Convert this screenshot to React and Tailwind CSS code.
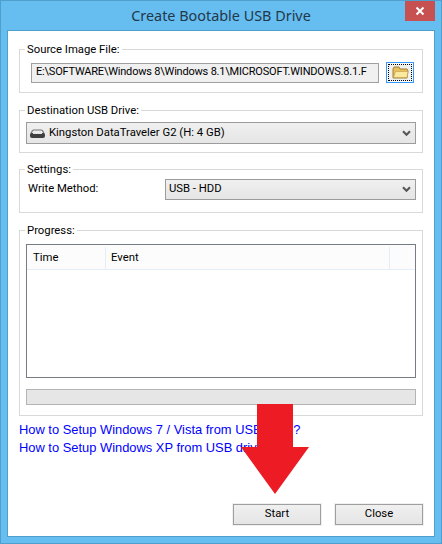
function Group({ label, className, children }) {
  return (
    <fieldset className={"border border-[#d9d9d9] " + className}>
      <legend className="ml-[5px] px-[2px] pt-[1px] font-['Roboto',sans-serif] text-[11.3px] leading-[15px] text-black">{label}</legend>
      {children}
    </fieldset>
  );
}

function Chevron() {
  return (
    <svg width="9" height="7" viewBox="0 0 9 7" className="shrink-0">
      <path d="M1 1.2 L4.5 4.8 L8 1.2" fill="none" stroke="#555" strokeWidth="2" />
    </svg>
  );
}

function Combo({ className, children }) {
  return (
    <div className={"flex items-center justify-between border border-[#9c9c9c] bg-gradient-to-b from-[#f0f0f0] to-[#e5e5e5] pr-[4px] font-['Roboto',sans-serif] text-[11.3px] text-black " + className}>
      {children}
      <Chevron />
    </div>
  );
}

function Btn({ children }) {
  return (
    <button className="flex h-[21px] w-[88px] items-center justify-center border border-[#9f9f9f] bg-gradient-to-b from-[#f0f0f0] to-[#e5e5e5] font-['Roboto',sans-serif] text-[11.3px] text-black outline outline-1 outline-[#f0f0f0]">
      {children}
    </button>
  );
}

export default function App() {
  return (
    <div className="relative flex h-[544px] w-[442px] flex-col border border-[#4f9fce] bg-[#66bdf0] font-['Liberation_Sans',sans-serif]">
      <div className="relative flex h-[29px] shrink-0 items-center justify-center">
        <span className="pt-[2px] font-['Noto_Sans',sans-serif] text-[14.4px] leading-none text-[#22384a]">Create Bootable USB Drive</span>
        <div className="absolute right-[6px] top-0 flex h-[20px] w-[30px] items-center justify-center bg-[#c75050]">
          <svg width="10" height="10" viewBox="0 0 10 10">
            <path d="M1.5 1.5 L8.5 8.5 M8.5 1.5 L1.5 8.5" stroke="#fff" strokeWidth="2" />
          </svg>
        </div>
      </div>
      <div className="ml-[6px] mr-[6px] flex h-[507px] flex-col border border-[#4f9fce] bg-white px-[11px] pt-[10px]">
        <Group label="Source Image File:" className="h-[52px] shrink-0">
          <div className="ml-[11px] mr-[8px] mt-[5px] flex items-center gap-[7px]">
            <div className="flex h-[20px] w-[348px] items-center overflow-hidden whitespace-nowrap border border-[#a0a0a0] bg-[#f0f0f0] pl-[4px] font-['Roboto',sans-serif] text-[11px] tracking-[-0.2px] text-black">
              E:\SOFTWARE\Windows 8\Windows 8.1\MICROSOFT.WINDOWS.8.1.F
            </div>
            <div className="flex h-[21px] w-[28px] items-center justify-center border border-[#3399ff] p-[1px]">
              <div className="flex h-full w-full items-center justify-center border border-dotted border-black bg-[#f0f0f0]">
                <svg width="17" height="13" viewBox="0 0 17 13">
                  <path d="M1 3 L1 12 L15 12 L16 5 L15 3 L8 3 L7 1 L2 1 Z" fill="#e8c060" stroke="#a08030" />
                  <path d="M1.5 11.5 L3.5 5.5 L16 5.5 L15 11.5 Z" fill="#fbe9a0" stroke="#c09c40" strokeWidth="0.6" />
                </svg>
              </div>
            </div>
          </div>
        </Group>
        <Group label="Destination USB Drive:" className="mt-[9px] h-[51px] shrink-0">
          <Combo className="mx-[6px] mt-[4px] h-[22px] pl-[2px]">
            <div className="flex items-center gap-[3px]">
              <svg width="17" height="9" viewBox="0 0 17 9">
                <path d="M2 5 Q3 1 5 1 L12 1 Q14 1 15 5 Z" fill="none" stroke="#777" strokeWidth="1.2" />
                <rect x="1" y="4" width="15" height="5" rx="2" fill="#3f3f3f" />
                <rect x="4" y="4" width="9" height="1" fill="#e4e4e4" />
              </svg>
              <span>Kingston DataTraveler G2 (H: 4 GB)</span>
            </div>
          </Combo>
        </Group>
        <Group label="Settings:" className="mt-[8px] h-[52px] shrink-0">
          <div className="mx-[6px] mt-[2px] flex items-center justify-between">
            <span className="pl-[2px] font-['Roboto',sans-serif] text-[11.3px] text-black">Write Method:</span>
            <Combo className="h-[21px] w-[251px] pl-[3px]">
              <span>USB - HDD</span>
            </Combo>
          </div>
        </Group>
        <Group label="Progress:" className="mt-[9px] h-[194px] shrink-0">
          <div className="mx-[6px] mt-[6px] h-[134px] border border-[#777b84] bg-white">
            <div className="flex h-[25px] border-b border-[#e5eef8] bg-[#fcfcfc] pt-[2px] font-['Roboto',sans-serif] text-[11.3px] text-black">
              <div className="flex w-[79px] items-center border-r border-[#e5eef8] pl-[6px]">Time</div>
              <div className="flex w-[284px] items-center border-r border-[#e5eef8] pl-[5px]">Event</div>
            </div>
          </div>
          <div className="mx-[6px] mt-[11px] h-[16px] border border-[#b4b4b4] bg-[#e6e6e6]" />
        </Group>
        <div className="mt-[5px] flex flex-col text-[12.9px] leading-[18px] text-[#0000ff]">
          <a href="#a">How to Setup Windows 7 / Vista from USB drive?</a>
          <a href="#b">How to Setup Windows XP from USB drive?</a>
        </div>
        <div className="mb-[11px] mt-auto flex justify-end gap-[14px]">
          <Btn>Start</Btn>
          <Btn>Close</Btn>
        </div>
      </div>
      <svg className="absolute left-[239px] top-[403px]" width="70" height="91" viewBox="0 0 70 91">
        <path d="M17 0 L53 0 L53 43 L69 43 L35 90 L1 43 L17 43 Z" fill="#ed1c24" />
      </svg>
    </div>
  );
}
